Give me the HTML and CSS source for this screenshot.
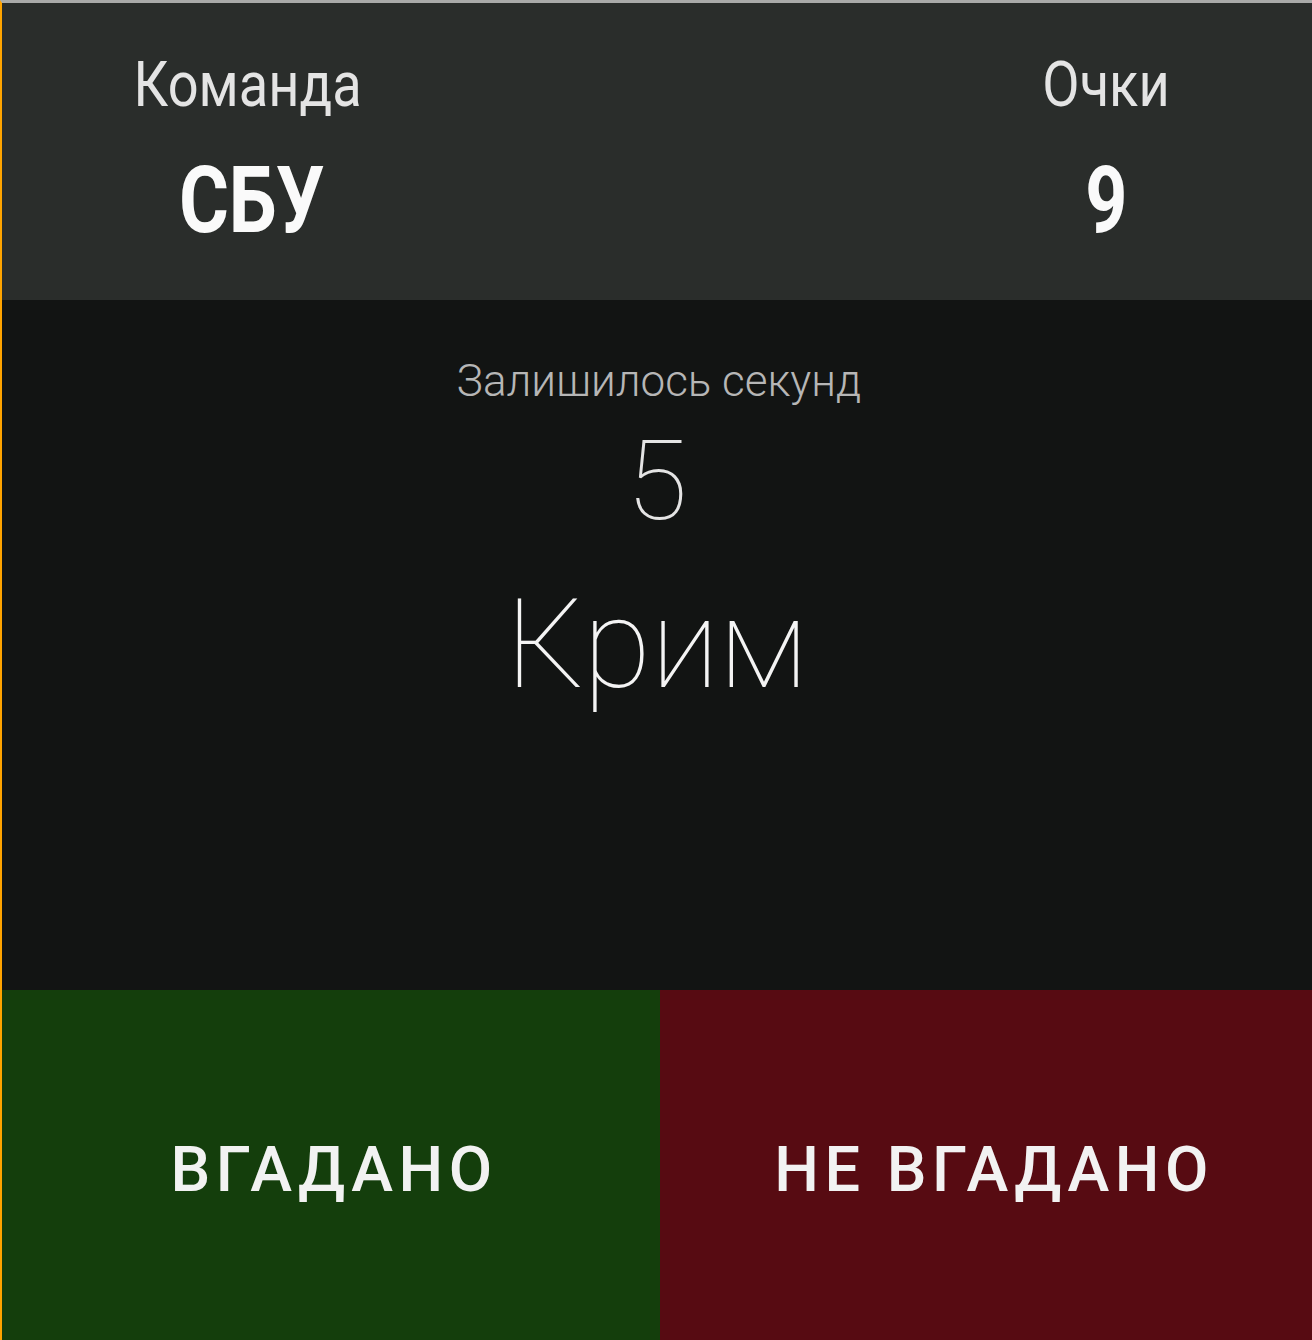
FILE: index.html
```html
<!DOCTYPE html>
<html lang="uk">
<head>
<meta charset="utf-8">
<title>Гра</title>
<link rel="stylesheet" href="styles.css">
</head>
<body>
<div class="app">
  <header class="scoreboard">
    <div class="col col-team">
      <div class="label"><span class="narrow">Команда</span></div>
      <div class="value"><span class="narrow">СБУ</span></div>
    </div>
    <div class="col col-score">
      <div class="label"><span class="narrow">Очки</span></div>
      <div class="value"><span class="narrow">9</span></div>
    </div>
  </header>
  <main class="play">
    <div class="timer-label">Залишилось секунд</div>
    <div class="timer">5</div>
    <div class="word">Крим</div>
  </main>
  <footer class="actions">
    <button class="btn btn-yes">ВГАДАНО</button>
    <button class="btn btn-no">НЕ ВГАДАНО</button>
  </footer>
</div>
</body>
</html>
```
FILE: styles.css
```css
html, body {
  margin: 0;
  padding: 0;
  height: 100%;
  background: #121413;
}
.app {
  height: 1340px;
  box-sizing: border-box;
  border-left: 2px solid #ffa400;
  border-top: 3px solid #a9aaa9;
  display: flex;
  flex-direction: column;
  font-family: Roboto, "Noto Sans", sans-serif;
  color: #f2f2f2;
}
.scoreboard {
  height: 297px;
  flex: none;
  background: #2a2d2b;
  display: flex;
  justify-content: space-between;
  padding: 0 56px 0 96px;
}
.col {
  width: 300px;
  display: flex;
  flex-direction: column;
  align-items: center;
}
.narrow {
  display: inline-block;
  transform: scaleX(0.86);
}
.label {
  font-size: 63px;
  font-weight: 400;
  line-height: 1;
  margin-top: 50px;
  color: #e4e4e4;
}
.value {
  font-size: 92px;
  font-weight: 700;
  line-height: 1;
  margin-top: 39px;
  color: #fafafa;
}
.col-team .value {
  padding-left: 8px;
}
.col-team .value .narrow {
  transform: scaleX(0.83);
}
.col-score .value .narrow {
  transform: scaleX(0.8);
}
.play {
  flex: 1;
  background: #121413;
  display: flex;
  flex-direction: column;
  align-items: center;
}
.timer-label {
  font-size: 44px;
  font-weight: 300;
  line-height: 1;
  color: #b6b6b6;
  margin-top: 59px;
  padding-left: 4px;
}
.timer {
  font-size: 112px;
  font-weight: 100;
  line-height: 1;
  color: #e4e4e4;
  margin-top: 22px;
}
.word {
  font-size: 124px;
  font-weight: 100;
  line-height: 1;
  color: #f4f4f4;
  margin-top: 46px;
}
.actions {
  height: 350px;
  flex: none;
  display: grid;
  grid-template-columns: 658px 1fr;
}
.btn {
  border: 0;
  margin: 0;
  font-family: Roboto, "Noto Sans", sans-serif;
  font-weight: 500;
  font-size: 63px;
  letter-spacing: 5.5px;
  color: #f2f2f2;
  cursor: pointer;
  padding: 8px 0 0 6px;
}
.btn-yes {
  background: #143e0c;
}
.btn-no {
  background: #570b12;
  padding-left: 16px;
}
```
